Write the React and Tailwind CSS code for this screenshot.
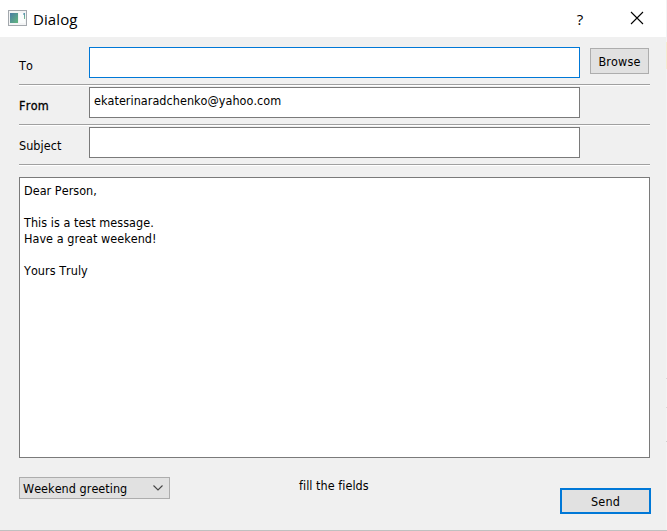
function Row({ label, bold, focus, value, button }) {
  return (
    <div className="h-10 w-[631px] border-b border-white">
      <div className="flex h-[39px] items-start border-b border-[#a0a0a0]">
        <div className={`w-[70px] shrink-0 pt-[12px] leading-4 ${bold ? "tracking-[0.3px] [-webkit-text-stroke:0.3px_black]" : ""}`}>{label}</div>
        <div className={`mt-px h-[31px] w-[491px] shrink-0 border bg-white pt-[5px] pl-1 leading-4 ${focus ? "border-[#0078d7]" : "border-[#7a7a7a]"}`}>{value}</div>
        {button}
      </div>
    </div>
  );
}

export default function App() {
  return (
    <div className="relative flex h-[531px] w-[667px] flex-col overflow-hidden border-b border-[#c0c0c0] bg-[#f0f0f0] font-['DejaVu_Sans_Condensed','DejaVu_Sans',sans-serif] text-[12.5px] tracking-[0.04px] text-black [font-kerning:none] [font-stretch:condensed] [font-variant-ligatures:none]">
      <header className="flex h-[37px] shrink-0 items-center bg-white pl-2 font-['Open_Sans','Noto_Sans',sans-serif] text-[15px] leading-5 tracking-normal [font-stretch:normal]">
        <svg width="19" height="16" viewBox="0 0 19 16" className="mt-[-1px]" shapeRendering="crispEdges">
          <defs>
            <linearGradient id="pane" x1="0" y1="0" x2="1" y2="1">
              <stop offset="0" stopColor="#487ba6" />
              <stop offset="1" stopColor="#62b77c" />
            </linearGradient>
            <linearGradient id="strip" x1="0" y1="0" x2="0" y2="1">
              <stop offset="0" stopColor="#5590b0" />
              <stop offset="1" stopColor="#78c08a" />
            </linearGradient>
          </defs>
          <rect x="0" y="0" width="19" height="16" fill="#a3a8ad" />
          <rect x="1" y="1" width="17" height="14" fill="#f3f4f5" />
          <rect x="2" y="3" width="8" height="10" fill="url(#pane)" />
          <rect x="11" y="3" width="6" height="10" fill="#fafcfc" />
          <rect x="16" y="3" width="1" height="6" fill="url(#strip)" />
          <rect x="15" y="3" width="1" height="2" fill="#9bbccb" />
        </svg>
        <h1 className="ml-[6px] w-[537px] tracking-[0.1px]">Dialog</h1>
        <span className="w-[20px] text-center">?</span>
        <svg width="12" height="12" viewBox="0 0 12 12" className="ml-[41px] mt-[-1px] overflow-visible" stroke="#000" strokeWidth="1.1">
          <path d="M0 0L12 12M12 0L0 12" />
        </svg>
      </header>
      <main className="flex flex-1 flex-col pr-4 pl-[19px] pt-[9px]">
        <Row label="To" focus value="" button={<button className="ml-[10px] mt-[2px] h-[26px] w-[59px] border border-[#adadad] bg-[#e1e1e1] pt-px leading-4 tracking-[0.15px]">Browse</button>} />
        <Row label="From" bold value="ekaterinaradchenko@yahoo.com" />
        <Row label="Subject" value="" />
        <div className="mt-[11px] h-[281px] w-[631px] shrink-0 whitespace-pre-line border border-[#7a7a7a] bg-white pt-[5px] pl-1 leading-4">
          {"Dear Person,\n\nThis is a test message.\nHave a great weekend!\n\nYours Truly"}
        </div>
        <div className="flex items-start">
          <div className="mt-[19px] flex h-[22px] w-[151px] items-center border border-[#adadad] bg-[#e1e1e1] pl-[3px] leading-4">
            <span className="w-[130px] pt-px">Weekend greeting</span>
            <svg width="10" height="6" viewBox="0 0 10 6" fill="none" stroke="#444" strokeWidth="1.1">
              <path d="M0.5 0.5L5 5L9.5 0.5" />
            </svg>
          </div>
          <span className="ml-[129px] mt-[20px] w-[261px] leading-4">fill the fields</span>
          <button className="mt-[30px] h-[26px] w-[91px] shrink-0 border-2 border-[#0078d7] bg-[#e1e1e1] pt-px leading-4 tracking-[0.2px]">Send</button>
        </div>
      </main>
      <div className="absolute top-0 right-0 h-[531px] w-px bg-[#f3f3f3]">
        <div className="mt-[42px] h-[27px] bg-[#f5ecd2]" />
        <div className="mt-[309px] h-px bg-[#d8d8d8]" />
        <div className="mt-[28px] h-px bg-[#d8d8d8]" />
        <div className="mt-[33px] h-px bg-[#d0d0d0]" />
      </div>
    </div>
  );
}
